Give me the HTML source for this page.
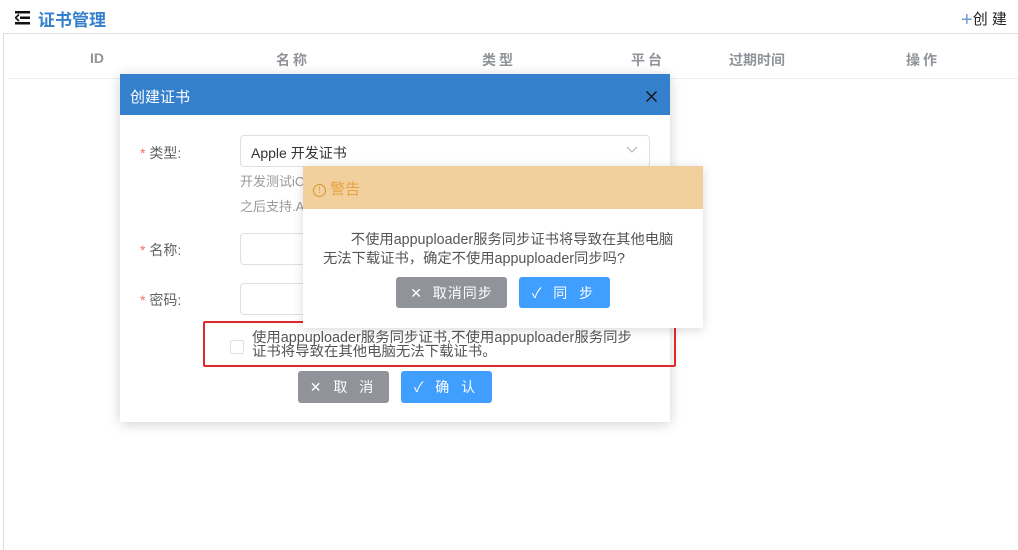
<!DOCTYPE html>
<html><head><meta charset="utf-8"><style>
*{margin:0;padding:0;box-sizing:border-box}
body{width:1018px;height:550px;background:#fff;position:relative;overflow:hidden;font-family:"Liberation Sans","Noto Sans CJK SC",sans-serif;font-size:14px;color:#606266}
.a{position:absolute;white-space:nowrap}
.th{position:absolute;top:50px;font-size:14px;font-weight:bold;color:#909399;letter-spacing:3px}
.btn{position:absolute;height:32px;color:#fff;font-size:14px;border-radius:3px;display:flex;align-items:center;justify-content:center;letter-spacing:4px}
.inp{position:absolute;border:1px solid #dcdfe6;border-radius:4px;background:#fff}
.star{color:#f56c6c}
</style></head><body>
<div class="a" style="left:3px;top:33px;width:1px;height:517px;background:#ddd"></div>
<div class="a" style="left:3px;top:33px;width:1015px;height:1px;background:#ddd"></div>
<svg class="a" style="left:15px;top:11px" width="16" height="14"><rect x="0" y="0" width="15" height="2.5" fill="#111"/><rect x="5" y="5.5" width="10" height="2.5" fill="#111"/><rect x="0" y="11" width="15" height="2.5" fill="#111"/><path d="M4 3.5 L0.5 6.75 L4 10" stroke="#111" stroke-width="1.6" fill="none"/></svg>
<div class="a" style="left:38px;top:6px;font-size:17px;font-weight:bold;color:#3580cc">证书管理</div>
<div class="a" style="left:961px;top:8px;font-size:15px;color:#222"><span style="color:#6f9bd2;font-size:20px;line-height:16px;vertical-align:-2px">+</span>创 建</div>
<div class="th" style="left:90px;letter-spacing:0">ID</div>
<div class="th" style="left:276px">名称</div>
<div class="th" style="left:482px">类型</div>
<div class="th" style="left:631px">平台</div>
<div class="th" style="left:729px;letter-spacing:0">过期时间</div>
<div class="th" style="left:906px">操作</div>
<div class="a" style="left:8px;top:78px;width:1010px;height:1px;background:#ebeef5"></div>

<div class="a" style="left:120px;top:74px;width:550px;height:348px;background:#fff;box-shadow:0 2px 12px rgba(0,0,0,.18)"></div>
<div class="a" style="left:120px;top:74px;width:550px;height:41px;background:#3580cc"></div>
<div class="a" style="left:130px;top:86px;font-size:15px;color:#fff">创建证书</div>
<svg class="a" style="left:646px;top:91px" width="11" height="11"><path d="M0.5 0.5 L10.5 10.5 M10.5 0.5 L0.5 10.5" stroke="#111" stroke-width="1.3"/></svg>
<div class="a" style="left:140px;top:143px"><span class="star">*</span> 类型:</div>
<div class="inp" style="left:240px;top:135px;width:410px;height:32px"></div>
<div class="a" style="left:251px;top:143px;color:#333">Apple 开发证书</div>
<svg class="a" style="left:626px;top:146px" width="12" height="8"><path d="M1 1 L6 6 L11 1" stroke="#b0b3b8" fill="none"/></svg>
<div class="a" style="left:240px;top:171px;color:#999;font-size:13px">开发测试iOS</div>
<div class="a" style="left:240px;top:196px;color:#999;font-size:13px">之后支持.A</div>
<div class="a" style="left:140px;top:240px"><span class="star">*</span> 名称:</div>
<div class="inp" style="left:240px;top:233px;width:100px;height:32px"></div>
<div class="a" style="left:140px;top:290px"><span class="star">*</span> 密码:</div>
<div class="inp" style="left:240px;top:283px;width:100px;height:32px"></div>
<div class="a" style="left:203px;top:321px;width:473px;height:46px;border:2px solid #e02a2a;border-radius:2px"></div>
<div class="a" style="left:230px;top:340px;width:14px;height:14px;border:1px solid #dcdfe6;border-radius:2px;background:#fff"></div>
<div class="a" style="left:252px;top:331px;line-height:14px;color:#555;font-size:14.4px">使用appuploader服务同步证书,不使用appuploader服务同步<br>证书将导致在其他电脑无法下载证书。</div>
<div class="btn" style="left:298px;top:371px;width:91px;background:#909399">✕ 取 消</div>
<div class="btn" style="left:401px;top:371px;width:91px;background:#409eff">✓ 确 认</div>

<div class="a" style="left:303px;top:166px;width:400px;height:162px;background:#fff;box-shadow:0 2px 10px rgba(0,0,0,.15)"></div>
<div class="a" style="left:303px;top:166px;width:400px;height:43px;background:#f1d09e"></div>
<div class="a" style="left:313px;top:178px;font-size:15px;color:#e6a23c"><span style="display:inline-block;width:13px;height:13px;border:1px solid #d8962c;border-radius:50%;font-size:10px;line-height:11px;text-align:center;vertical-align:1px">!</span> 警告</div>
<div class="a" style="left:323px;top:231px;line-height:19px;color:#555;font-size:14.3px">&nbsp;&nbsp;&nbsp;&nbsp;&nbsp;&nbsp;&nbsp;不使用appuploader服务同步证书将导致在其他电脑<br>无法下载证书，确定不使用appuploader同步吗?</div>
<div class="btn" style="left:396px;top:277px;width:111px;height:31px;background:#909399;letter-spacing:1px">✕&nbsp; 取消同步</div>
<div class="btn" style="left:519px;top:277px;width:91px;height:31px;background:#409eff">✓ 同 步</div>
</body></html>
